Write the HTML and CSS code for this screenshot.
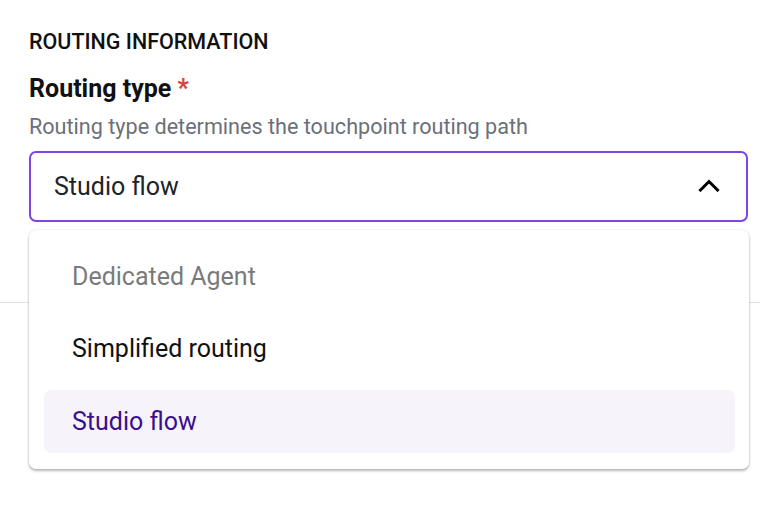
FILE: index.html
```html
<!DOCTYPE html>
<html lang="en">
<head>
<meta charset="utf-8">
<title>Routing information</title>
<link rel="stylesheet" href="styles.css">
</head>
<body>
<section class="form">
  <h2 class="section-title">ROUTING INFORMATION</h2>
  <div class="field">
    <label class="label">Routing type <span class="req">*</span></label>
    <p class="helper">Routing type determines the touchpoint routing path</p>
    <div class="select-wrap">
      <div class="select">
        <span class="value">Studio flow</span>
        <svg class="chevron" width="22" height="14" viewBox="0 0 22 14" aria-hidden="true">
          <path d="M2.5 12 L11 3.5 L19.5 12" fill="none" stroke="#000" stroke-width="3" stroke-linecap="square" stroke-linejoin="miter"/>
        </svg>
      </div>
      <ul class="menu">
        <li class="option disabled">Dedicated Agent</li>
        <li class="option">Simplified routing</li>
        <li class="option selected">Studio flow</li>
      </ul>
    </div>
  </div>
</section>
<hr class="divider">
</body>
</html>
```

FILE: styles.css
```css
* { box-sizing: border-box; }

html, body {
  margin: 0;
  padding: 0;
  background: #ffffff;
  font-family: Roboto, "Liberation Sans", Arial, sans-serif;
  color: #111111;
  width: 760px;
  height: 510px;
  overflow: hidden;
}

.form {
  padding: 30px 12px 0 29px;
}

.section-title {
  margin: 0 0 20.8px 0;
  font-size: 21.5px;
  line-height: 24px;
  font-weight: 500;
  color: #111111;
}

.field {
  display: flex;
  flex-direction: column;
}

.label {
  font-size: 25px;
  line-height: 28px;
  font-weight: 700;
  color: #111111;
}

.req {
  color: #d6443a;
}

.helper {
  margin: 12.2px 0 12px 0;
  font-size: 21.6px;
  line-height: 24px;
  color: #6b7079;
}

.select-wrap {
  position: relative;
}

.select {
  height: 71px;
  border: 2px solid #8043e6;
  border-radius: 7px;
  display: flex;
  align-items: center;
  justify-content: space-between;
  padding: 0 26px 0 23px;
}

.value {
  font-size: 25px;
  color: #202329;
}

.chevron {
  display: block;
  margin-top: -2px;
}

.menu {
  position: absolute;
  top: calc(100% + 8px);
  left: 0;
  right: -1px;
  margin: 0;
  padding: 15px 14px 16px 15px;
  list-style: none;
  background: #ffffff;
  border-radius: 7px;
  box-shadow: 0 2px 3px rgba(0, 0, 0, 0.28), 0 0 2px rgba(0, 0, 0, 0.12);
  display: flex;
  flex-direction: column;
  gap: 9.5px;
  z-index: 2;
}

.option {
  height: 63px;
  display: flex;
  align-items: center;
  padding: 0 28px;
  font-size: 25px;
  color: #111111;
  border-radius: 7px;
}

.option.disabled {
  color: #7a7a7a;
}

.option.selected {
  background: #f6f3fa;
  color: #3a0f8e;
}

.divider {
  margin: 80px 0 0 0;
  border: 0;
  border-top: 1px solid #e2e2e2;
  height: 0;
}
```
